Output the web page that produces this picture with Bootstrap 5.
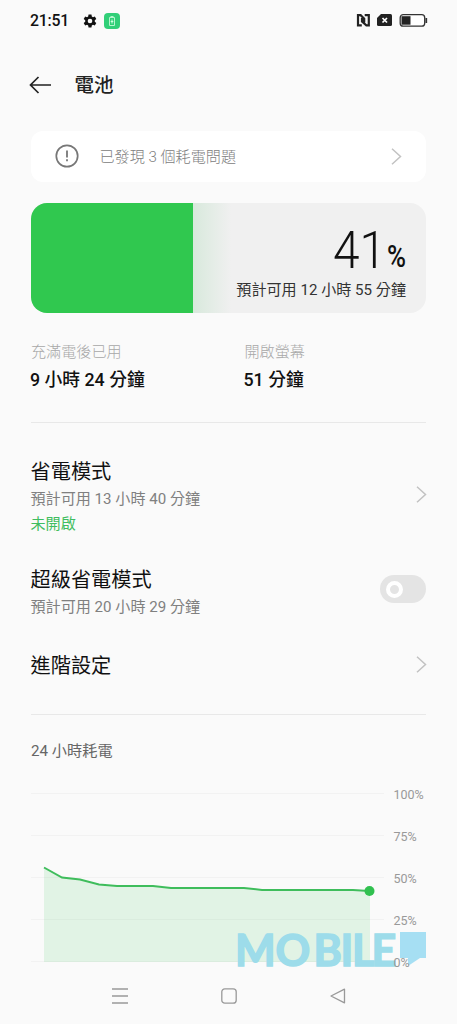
<!DOCTYPE html>
<html lang="zh-Hant">
<head>
<meta charset="utf-8">
<meta name="viewport" content="width=device-width, initial-scale=1">
<title>電池</title>
<link href="https://cdn.jsdelivr.net/npm/bootstrap@5.3.0/dist/css/bootstrap.min.css" rel="stylesheet">
<style>
body{background:#fafafa;color:#111;font-family:Roboto,"Noto Sans CJK TC",sans-serif;font-size:15.1px;overflow:hidden}
svg{display:block;flex:none;overflow:visible}
.screen{width:457px;height:1024px;padding:0 31px}
.statusbar{height:41px;font-size:15.8px;font-weight:500}
.clock{width:39px;margin-left:-1px;letter-spacing:-.2px}
.topbar{height:90px;font-size:19.5px;font-weight:500;color:#222}
.notice{height:51px;border-radius:12px;color:#808080;padding:2px 24px 0 24px;font-weight:300}
.battery{height:110px;margin-top:21px;border-radius:16px;background:#f0f0f0;overflow:hidden}
.charge{background:#30c84f}
.fade-edge{width:38px;background:linear-gradient(90deg,#d8e9dc,#f0f0f0)}
.reading{padding:25px 20px 0 0}
.estimate{line-height:22px;margin:5px 0 0 -30px;color:#333}
.stats{height:109px;padding-top:28px}
.stats .caption{line-height:22px;color:#a8a8a8;font-weight:300}
.stats .amount{line-height:26px;margin-top:4px;font-size:17.8px;font-weight:500;margin-left:-1px}
.rule{height:1px;background:#e8e8e8}
.setting .heading{font-size:20.2px;line-height:30px;color:#111}
.setting .sub{line-height:25px;color:#808080}
.setting .state{line-height:25px;color:#3fbd60}
.setting .labels{padding-top:3px;margin-left:-.5px}
.toggle{width:46px;height:28px;border-radius:14px;background:#e4e4e4;padding-left:6px;margin-top:-3px}
.knob{width:17px;height:17px;border:4px solid #fff;border-radius:50%}
.chart-title{line-height:24px;margin-top:24px;font-size:15.2px;color:#666}
.chart{height:202px;margin-top:9px}
.chart svg text{font-size:12.5px;fill:#999}
.chart svg .watermark{font:700 43px Lato,sans-serif;fill:#9ddcea;stroke:#9ddcea;stroke-width:1.500}
.navbtns{height:44px;padding:0 50px 0 81px}
</style>
</head>
<body>
<main class="screen d-flex flex-column">
  <header class="statusbar d-flex align-items-center">
    <span class="clock">21:51</span>
    <svg style="margin-left:14px" width="14" height="14" viewBox="0 0 24 24"><path fill="#111" fill-rule="evenodd" d="M9.500 1h5l.6 3.400 2 1.100 3.200-1.200 2.500 4.300-2.600 2.200v2.400l2.600 2.200-2.500 4.300-3.200-1.200-2 1.100-.6 3.400h-5l-.6-3.400-2-1.100-3.200 1.200-2.500-4.300 2.600-2.200v-2.400L1.200 8.600l2.500-4.300 3.200 1.200 2-1.100zM12 8a4 4 0 1 0 0 8 4 4 0 0 0 0-8z"/></svg>
    <svg style="margin-left:7px" width="16" height="16" viewBox="0 0 16 16"><rect width="16" height="16" rx="4" fill="#31cf78"/><path d="M6.500 3.500h3M5.500 4.500h5v8h-5z" fill="none" stroke="#b5f5cd"/><path d="M8 6.500v4M6.700 8.500h2.600" stroke="#d3ffe3"/></svg>
    <svg class="ms-auto" style="margin-right:-1px" width="71" height="15" viewBox="0 0 71 15"><path d="M5.800 12.300H2V2.200h2.600L8.200 5.600V9.500M8.700 2.200H12.800v10.100h-2.400L6 8.500V5" fill="none" stroke="#222" stroke-width="2.200"/><path d="M25 1h9.500q1.500 0 1.500 1.500v9q0 1.500-1.500 1.500h-12q-1.500 0-1.500-1.500V5z" fill="#222"/><path d="M26.500 5l4.500 4.500m0-4.500l-4.500 4.500" stroke="#fff" stroke-width="1.700"/><rect x="44.200" y="1.700" width="24.500" height="11.500" rx="3" fill="#fff" stroke="#333" stroke-width="1.300"/><path d="M45.500 3.200h9v8.500h-9z" fill="#222"/><path d="M70.300 5v5" stroke="#333" stroke-width="1.700"/></svg>
  </header>

  <div class="topbar d-flex align-items-center">
    <svg style="margin-left:-2px;margin-top:-2px" width="23" height="18" viewBox="0 0 23 18" fill="none" stroke="#222" stroke-width="1.700"><path d="M22 9H1.500M9.500 1l-8 8 8 8"/></svg>
    <span style="margin-left:22.500px">電池</span>
  </div>

  <div class="notice bg-white d-flex align-items-center">
    <svg style="margin-top:-3px" width="24" height="24" viewBox="0 0 24 24"><circle cx="12" cy="12" r="10.700" fill="none" stroke="#777" stroke-width="1.700"/><path d="M12 6.500v7M12 15.200v2" stroke="#777" stroke-width="1.800"/></svg>
    <span style="margin-left:20.500px">已發現 3 個耗電問題</span>
    <svg class="ms-auto" style="margin-top:-2px" width="11" height="17" viewBox="0 0 11 17" fill="none" stroke="#c2c2c2" stroke-width="1.500"><path d="M1 .7l8.500 7.800L1 16.300"/></svg>
  </div>

  <section class="battery d-flex">
    <div class="charge" style="width:41%"></div>
    <div class="fade-edge"></div>
    <div class="reading flex-fill">
      <svg class="ms-auto" width="80" height="46" viewBox="0 0 80 46"><text x="7" y="39.500" font-size="52" font-weight="300" textLength="53" lengthAdjust="spacingAndGlyphs" fill="#111">41</text><text x="61" y="39" font-size="31" font-weight="500" textLength="19" lengthAdjust="spacingAndGlyphs" fill="#111">%</text></svg>
      <div class="estimate text-end text-nowrap">預計可用 12 小時 55 分鐘</div>
    </div>
  </section>

  <section class="stats d-flex">
    <div style="width:213.500px"><div class="caption">充滿電後已用</div><div class="amount">9 小時 24 分鐘</div></div>
    <div><div class="caption">開啟螢幕</div><div class="amount">51 分鐘</div></div>
  </section>
  <div class="rule"></div>

  <section class="setting d-flex justify-content-between align-items-center" style="height:80px;margin-top:32px">
    <div class="labels"><div class="heading">省電模式</div><div class="sub">預計可用 13 小時 40 分鐘</div><div class="state">未開啟</div></div>
    <svg style="margin:-2px -1px 0 0" width="11" height="17" viewBox="0 0 11 17" fill="none" stroke="#c2c2c2" stroke-width="1.500"><path d="M1 .7l8.500 7.800L1 16.300"/></svg>
  </section>
  <section class="setting d-flex justify-content-between align-items-center" style="height:55px;margin-top:28px">
    <div class="labels"><div class="heading">超級省電模式</div><div class="sub">預計可用 20 小時 29 分鐘</div></div>
    <div class="toggle d-flex align-items-center"><div class="knob"></div></div>
  </section>
  <section class="setting d-flex justify-content-between align-items-center" style="height:30px;margin-top:31px">
    <div class="labels heading">進階設定</div>
    <svg style="margin-right:-1px" width="11" height="17" viewBox="0 0 11 17" fill="none" stroke="#c2c2c2" stroke-width="1.500"><path d="M1 .7l8.500 7.800L1 16.300"/></svg>
  </section>
  <div class="rule" style="margin-top:35px"></div>

  <div class="chart-title">24 小時耗電</div>
  <section class="chart">
    <svg width="396" height="202" viewBox="31 772 396 202">
      <path d="M31 793.500h353M31 835.500h353M31 877.500h353M31 919.500h353M31 961.500h353" stroke="#f2f2f2"/>
      <path d="M44 867l18 10.500 18 2 19 5 18 1.500h36l18 2h73l18 2h91l17 1.500V962H44z" fill="#30c84f" fill-opacity=".12"/>
      <path d="M44 867.500l18 10 18 2 19 5 18 1.500h36l18 2h73l18 2h91l16 1" fill="none" stroke="#3fbd5c" stroke-width="2"/>
      <circle cx="369.500" cy="891" r="5" fill="#30c04f"/>
      <text x="393.500" y="799">100%</text><text x="393.500" y="841">75%</text><text x="393.500" y="883">50%</text><text x="393.500" y="925">25%</text>
      <text class="watermark" x="235 275.500 313.500 340.500 352 371.500" y="965.500">MOBILE</text>
      <path d="M400 932h26v26h-6l-12 8v-8h-8z" fill="#a6dff3"/>
      <text x="393.500" y="967">0%</text>
    </svg>
  </section>

  <nav class="navbtns d-flex justify-content-between align-items-center" aria-label="導覽">
    <svg width="16" height="16" viewBox="0 0 16 16" stroke="#999" stroke-width="1.300"><path d="M0 1h16M0 8h16M0 15h16"/></svg>
    <svg width="16" height="16" viewBox="0 0 16 16"><rect x=".8" y=".8" width="14.400" height="14.400" rx="3" fill="none" stroke="#999" stroke-width="1.300"/></svg>
    <svg style="margin-right:30px" width="16" height="16" viewBox="0 0 16 16"><path d="M14.500 1.200v13.600L1 8z" fill="none" stroke="#999" stroke-width="1.300" stroke-linejoin="round"/></svg>
  </nav>
</main>
<script src="https://cdn.jsdelivr.net/npm/bootstrap@5.3.0/dist/js/bootstrap.bundle.min.js"></script>
</body>
</html>
